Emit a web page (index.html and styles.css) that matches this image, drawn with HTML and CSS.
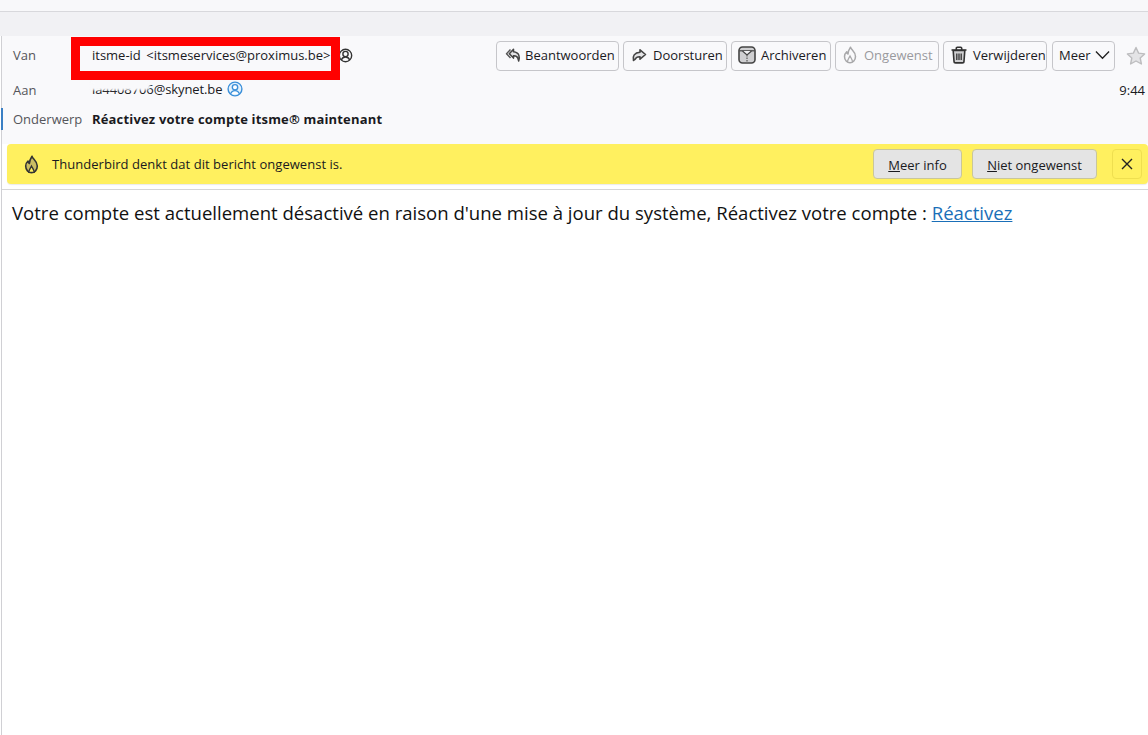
FILE: index.html
```html
<!DOCTYPE html>
<html lang="nl">
<head>
<meta charset="utf-8">
<title>Thunderbird</title>
<link rel="stylesheet" href="styles.css">
</head>
<body>
<div class="top-band"></div>
<div class="sub-band"></div>
<div class="pane">
  <header class="headers">
    <div class="row row-from">
      <span class="label">Van</span>
      <span class="value from">itsme-id &lt;itsmeservices@proximus.be&gt;</span>
      <svg class="contact" viewBox="0 0 16 16"><circle cx="8" cy="8" r="6.600" fill="none" stroke="#333" stroke-width="1.500"/><circle cx="8" cy="6.400" r="2.800" fill="none" stroke="#333" stroke-width="1.500"/><path d="M3.500 12.800c.8-2 2.400-3.200 4.500-3.200s3.700 1.200 4.500 3.200" fill="none" stroke="#333" stroke-width="1.500"/></svg>
      <div class="actions">
        <button class="btn btn-reply"><svg class="ico" viewBox="0 0 16 16"><path d="M5.500 2.500 1.500 6.700l4 4.300" fill="none" stroke="#555" stroke-width="1.400" stroke-linejoin="round"/><path d="M8.500 2.200 4.300 6.700l4.200 4.400V8.800c2.300-.2 3.600.6 4.300 2.300l.9 3c1.300-3.800.8-8.900-5.200-9.400z" fill="#e4e4e6" stroke="#444" stroke-width="1.500" stroke-linejoin="round"/></svg>Beantwoorden</button>
        <button class="btn btn-fwd"><svg class="ico" viewBox="0 0 16 16"><path d="M9 2.800 14.500 7.500 9 12.200V9.800c-2.500-.2-4 .6-5 2.500l-1.500 1.200C1.200 9.300 3.500 5.500 9 5.200z" fill="#e4e4e6" stroke="#444" stroke-width="1.600" stroke-linejoin="round"/></svg>Doorsturen</button>
        <button class="btn btn-arc"><svg class="ico ico-l" viewBox="0 0 18 18"><rect x="1" y="1" width="16" height="16" rx="3.500" fill="#cfcfd1" stroke="#444" stroke-width="1.600"/><path d="M1.500 4.800h15" stroke="#444" stroke-width="1.200"/><path d="M4.500 5l4.500 4 4.500-4" fill="#f2f2f4" stroke="#444" stroke-width="1.200"/><path d="M9 9v8" stroke="#777" stroke-width="1.600" stroke-dasharray="1.500 1"/></svg>Archiveren</button>
        <button class="btn btn-off"><svg class="ico ico-l" viewBox="0 0 16 18"><path d="M8.500 1.200c.4 2.500 5 4.300 5 9.300 0 3.700-2.600 6.300-5.500 6.300s-5.500-2.600-5.500-6.300c0-2.200 1-3.700 2.200-4.800 0 1.300.5 2 1.300 2.300C6 6 7 3.500 8.500 1.200z" fill="none" stroke="#a8a8aa" stroke-width="1.500" stroke-linejoin="round"/><path d="M5.500 16c0-2.500 1.300-3.500 2.500-6 1.200 2.500 2.500 3.500 2.500 6" fill="none" stroke="#a8a8aa" stroke-width="1.300"/></svg>Ongewenst</button>
        <button class="btn btn-del"><svg class="ico ico-l" viewBox="0 0 16 18"><path d="M.5 4h15M5.300 4V2.300c0-.6.400-1 1-1h3.400c.6 0 1 .4 1 1V4" fill="none" stroke="#333" stroke-width="1.600"/><path d="M2.200 4.500 3 15.200c0 1 .7 1.700 1.700 1.700h6.600c1 0 1.700-.7 1.700-1.700l.8-10.700z" fill="#cfcfd1" stroke="#333" stroke-width="1.600"/><path d="M5.800 7.500v6.500M8 7.500v6.500M10.200 7.500v6.500" stroke="#333" stroke-width="1.300"/></svg>Verwijderen</button>
        <button class="btn btn-more">Meer<svg class="chev" viewBox="0 0 16 10"><path d="M1 1.200 8 8.500l7-7.300" fill="none" stroke="#222" stroke-width="1.400"/></svg></button>
      </div>
      <svg class="star" viewBox="0 0 20 20"><path d="M10 1.500l2.600 5.600 6 .8-4.400 4.100 1.200 6-5.400-3-5.400 3 1.200-6L1.400 7.900l6-.8z" fill="#e4e4e6" stroke="#bdbdbf" stroke-width="1.400" stroke-linejoin="round"/></svg>
    </div>
    <div class="row row-to">
      <span class="label">Aan</span>
      <span class="value to">la4408706@skynet.be<span class="smudge"></span></span>
      <svg class="contact contact-blue" viewBox="0 0 16 16"><circle cx="8" cy="8" r="6.900" fill="#e3f1fc" stroke="#3a8fd9" stroke-width="1.400"/><circle cx="8" cy="6.300" r="2.700" fill="#fff" stroke="#3a8fd9" stroke-width="1.400"/><path d="M3.500 13c.8-2.200 2.400-3.400 4.500-3.400s3.700 1.200 4.500 3.400" fill="#fff" stroke="#3a8fd9" stroke-width="1.400"/></svg>
      <span class="time">9:44</span>
    </div>
    <div class="row row-subj">
      <span class="label">Onderwerp</span>
      <span class="value subject">Réactivez votre compte itsme® maintenant</span>
    </div>
  </header>
  <div class="notice">
    <svg class="flame" viewBox="0 0 16 18"><path d="M8.500 1.200c.4 2.500 5 4.300 5 9.300 0 3.700-2.600 6.300-5.500 6.300s-5.500-2.600-5.500-6.300c0-2.200 1-3.700 2.200-4.800 0 1.300.5 2 1.300 2.300C6 6 7 3.500 8.500 1.200z" fill="#cbbd62" stroke="#333" stroke-width="1.500" stroke-linejoin="round"/><path d="M5.500 16.500c0-2.500 1.300-3.500 2.500-6 1.200 2.500 2.500 3.500 2.500 6z" fill="#fff05f" stroke="#333" stroke-width="1.300"/></svg>
    <span class="notice-text">Thunderbird denkt dat dit bericht ongewenst is.</span>
    <button class="nbtn nbtn-info"><u>M</u>eer info</button>
    <button class="nbtn nbtn-not"><u>N</u>iet ongewenst</button>
    <button class="nclose"><svg viewBox="0 0 12 12"><path d="M1 1l10 10M11 1 1 11" stroke="#222" stroke-width="1.400" fill="none"/></svg></button>
  </div>
  <main class="body-text">Votre compte est actuellement désactivé en raison d'une mise à jour du système, Réactivez votre compte : <a href="#">Réactivez</a></main>
</div>
<div class="redact"></div>
</body>
</html>
```
FILE: styles.css
```css
* { box-sizing: border-box; }
html, body { margin: 0; padding: 0; height: 100%; overflow: hidden; }
body { background: #fff; font-family: "Open Sans", "Noto Sans", sans-serif; color: #1a1a1e; font-size: 13px; position: relative; }
.top-band { height: 12px; background: #f8f8fa; border-bottom: 1px solid #d8d8dc; }
.sub-band { height: 24px; background: #f1f1f4; }
.pane { height: 699px; border-left: 1px solid #d0d0d4; margin-left: 1px; display: flex; flex-direction: column; }
.headers { background: #f9f9fb; height: 108px; display: flex; flex-direction: column; padding-top: 5px; flex: none; }
.row { display: flex; align-items: center; padding-left: 11px; }
.row-from { height: 29px; }
.row-to { height: 29px; margin-top: 6px; }
.row-subj { height: 29px; position: relative; }
.row-subj::before { content: ""; position: absolute; left: -1px; top: 3px; width: 2px; height: 22px; background: #3a7fc4; }
.label { width: 79px; color: #55555a; flex: none; padding-bottom: 2px; }
.value { white-space: nowrap; padding-bottom: 2px; }
.from { width: 246px; flex: none; word-spacing: 2.200px; letter-spacing: -0.010px; }
.contact { width: 15px; height: 15px; flex: none; }
.contact-blue { width: 16px; height: 16px; margin-left: 5px; margin-top: -4px; }
.to { position: relative; margin-top: -1px; letter-spacing: -0.100px; }
.smudge { position: absolute; left: -2px; top: 2px; width: 60px; height: 8px; background: #f9f9fb; border-radius: 3px; filter: blur(1.200px); }
.time { margin-left: auto; padding: 0 3px 2px 0; }
.subject { font-weight: 700; letter-spacing: .17px; }
.actions { display: flex; gap: 4px; margin-left: 143px; }
.btn { height: 30px; display: flex; align-items: center; padding: 0 0 2px 8px; background: #f9f9fb; border: 1px solid #c6c6ca; border-radius: 4px; font: inherit; color: #1a1a1e; white-space: nowrap; }
.btn-reply { width: 123px; gap: 4px; }
.btn-fwd { width: 104px; gap: 6px; padding-left: 7px; }
.btn-arc { width: 100px; gap: 5px; padding-left: 6px; }
.btn-off { width: 104px; gap: 5px; padding-left: 5px; color: #9a9a9e; }
.btn-del { width: 104px; gap: 5px; padding-left: 6px; }
.btn-more { width: 63px; gap: 4px; margin-left: 1px; padding-left: 6px; }
.ico { width: 16px; height: 16px; flex: none; }
.ico-l { width: 18px; height: 18px; }
.chev { width: 15px; height: 10px; }
.star { width: 20px; height: 20px; flex: none; margin-left: 11px; }
.notice { margin-left: 5px; width: 1141px; height: 40px; background: #fff05f; border-radius: 4px; display: flex; align-items: center; padding-left: 16px; box-shadow: 0 1px 1px rgba(0,0,0,.08); flex: none; }
.flame { width: 17px; height: 19px; flex: none; }
.notice-text { margin-left: 12px; letter-spacing: .04px; }
.nbtn { height: 30px; background: #e4e4e4; border: 1px solid #c9c69a; border-radius: 4px; font: inherit; color: #1a1a1e; padding: 2px 0 0; }
.nbtn-info { width: 89px; margin-left: auto; }
.nbtn-not { width: 125px; margin-left: 10px; }
.nclose { width: 30px; height: 30px; margin: 0 6px 0 15px; background: #fff05f; border: 1px solid #efdf50; border-radius: 4px; padding: 8px; display: flex; }
.nclose svg { width: 12px; height: 12px; }
.body-text { margin-top: 5px; border-top: 1px solid #d6d6d8; padding: 11px 0 0 10px; font-size: 18.560px; color: #111; flex: 1; background: #fff; line-height: 24px; }
.body-text a { color: #1a6fb8; }
.redact { position: absolute; left: 71px; top: 37px; width: 269px; height: 43px; border: 9px solid #f00; }
```
